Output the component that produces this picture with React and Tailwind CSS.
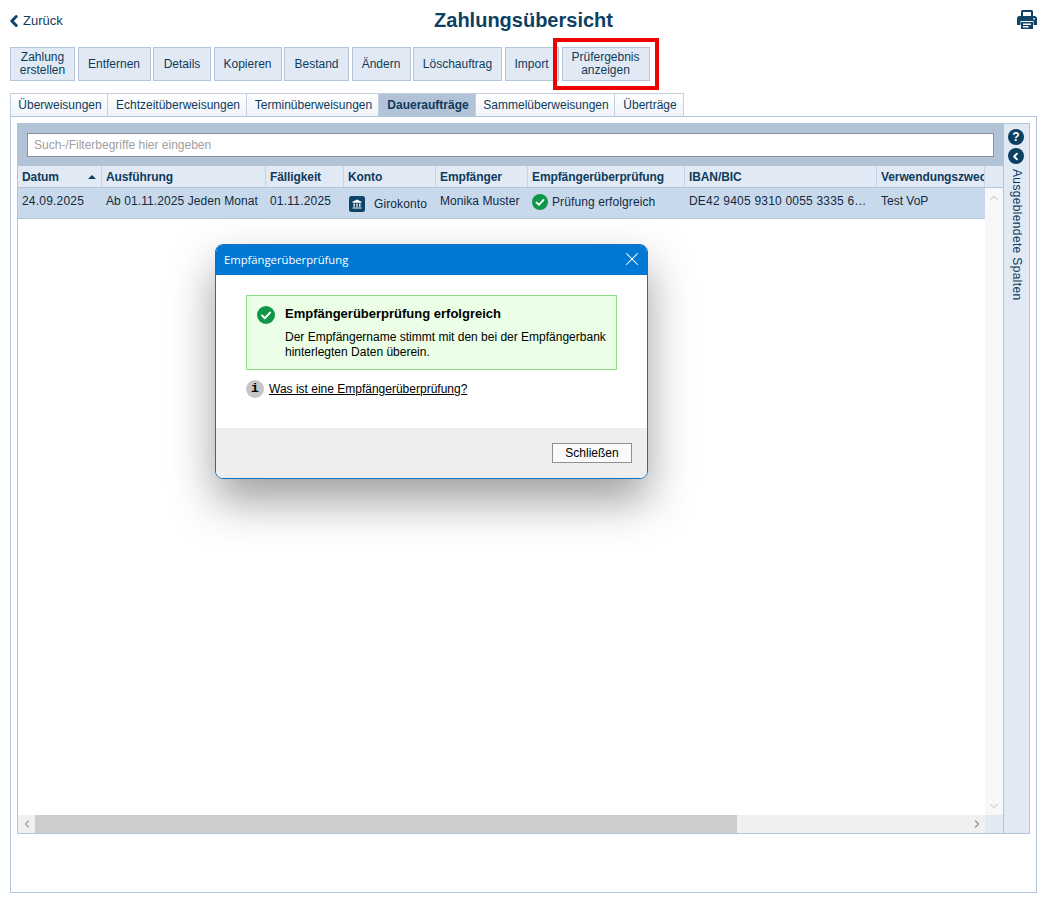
import React from 'react';
import { X, ChevronUp, ChevronDown, ChevronLeft, ChevronRight } from 'lucide-react';

const actions = [
  { label: ['Zahlung', 'erstellen'], width: 'w-[65px]' },
  { label: ['Entfernen'], width: 'w-[73px]' },
  { label: ['Details'], width: 'w-[58px]' },
  { label: ['Kopieren'], width: 'w-[68px]' },
  { label: ['Bestand'], width: 'w-[65px]' },
  { label: ['Ändern'], width: 'w-[59px]' },
  { label: ['Löschauftrag'], width: 'w-[89px]' },
  { label: ['Import'], width: 'w-[54px]' },
];

const tabs = [
  { label: 'Überweisungen', width: 'w-[98px]' },
  { label: 'Echtzeitüberweisungen', width: 'w-[139px]' },
  { label: 'Terminüberweisungen', width: 'w-[132px]' },
  { label: 'Daueraufträge', width: 'w-[97px]', active: true },
  { label: 'Sammelüberweisungen', width: 'w-[139px]' },
  { label: 'Überträge', width: 'w-[69px]' },
];

const columns = [
  { label: 'Datum', width: 'w-[84px]', sort: true },
  { label: 'Ausführung', width: 'w-[164px]' },
  { label: 'Fälligkeit', width: 'w-[78px]' },
  { label: 'Konto', width: 'w-[92px]' },
  { label: 'Empfänger', width: 'w-[92px]' },
  { label: 'Empfängerüberprüfung', width: 'w-[157px]' },
  { label: 'IBAN/BIC', width: 'w-[192px]' },
  { label: 'Verwendungszweck', width: 'w-[108px]' },
];

function CheckBadge({ size }) {
  return (
    <svg width={size} height={size} viewBox="0 0 18 18" className="shrink-0">
      <circle cx="9" cy="9" r="9" fill="#109648" />
      <path d="M5 9.4l2.8 2.8L13 6.6" fill="none" stroke="#fff" strokeWidth="2" strokeLinecap="round" strokeLinejoin="round" />
    </svg>
  );
}

function BankIcon() {
  return (
    <svg width="16" height="16" viewBox="0 0 16 16" className="shrink-0">
      <rect width="16" height="16" rx="2.5" fill="#0d4468" />
      <path d="M8 3.5L3.5 5.8v.9h9v-.9zM4.5 7.4h1.3v3.4H4.5zM7.35 7.4h1.3v3.4h-1.3zM10.2 7.4h1.3v3.4h-1.3zM3.5 11.4h9v1.2h-9z" fill="#fff" />
    </svg>
  );
}

function PrinterIcon() {
  return (
    <svg width="20" height="21" viewBox="0 0 20 21">
      <path d="M4 8V2.6C4 1.7 4.7 1 5.6 1h8.8c.9 0 1.6.7 1.6 1.6V8h-2V3H6v5z" fill="#0d4468" />
      <path d="M2.5 7h15C18.9 7 20 8.1 20 9.5V16h-3.5v-4h-13v4H0V9.5C0 8.1 1.1 7 2.5 7z" fill="#0d4468" />
      <path d="M4 13h12v7H4z" fill="#0d4468" />
      <path d="M6 14.5h8v1.4H6zM6 17h5.5v1.4H6z" fill="#fff" />
      <circle cx="17" cy="9.8" r="0.9" fill="#fff" />
    </svg>
  );
}

export default function App() {
  return (
    <div className="relative h-[898px] w-[1043px] overflow-hidden bg-white font-['Liberation_Sans',Arial,sans-serif] text-xs text-[#0f3a5c]">
      {/* Kopfzeile */}
      <div className="flex h-[47px] items-start pl-[10px] pr-[6px] pt-[9px]">
        <div className="flex h-[22px] w-[200px] items-center pt-[1px] text-[13px]">
          <ChevronLeft size={18} strokeWidth={4} className="-ml-[5px] text-[#0d4468]" />
          <span>Zurück</span>
        </div>
        <h1 className="flex-1 text-center text-xl leading-[22px] font-bold text-[#0d3f63]">Zahlungsübersicht</h1>
        <div className="flex w-[200px] justify-end">
          <PrinterIcon />
        </div>
      </div>

      {/* Aktionen */}
      <div className="flex h-[34px] gap-[2.5px] pl-[10px]">
        {actions.map((a) => (
          <button key={a.label[0]} className={`${a.width} border border-[#b4c4d9] bg-[#e1eaf4] text-center leading-[13px]`}>
            {a.label.map((l) => (
              <div key={l}>{l}</div>
            ))}
          </button>
        ))}
        <div className="relative ml-[0.5px]">
          <button className="h-[34px] w-[88px] border border-[#b4c4d9] bg-[#e1eaf4] text-center leading-[13px]">
            <div>Prüfergebnis</div>
            <div>anzeigen</div>
          </button>
          <div className="pointer-events-none absolute -inset-[9px] border-4 border-[#ee0000]" />
        </div>
      </div>

      {/* Tabs */}
      <div className="mt-[12px] flex h-[23px] pl-[10px]">
        {tabs.map((t) => (
          <div
            key={t.label}
            className={`${t.width} flex items-center justify-center border-t border-r border-[#c3d0e0] pl-[2px] first:border-l ${
              t.active ? 'border-[#b3c3d7] bg-[#b3c3d7] font-bold' : 'bg-gradient-to-b from-white to-[#eef3f9]'
            }`}
          >
            {t.label}
          </div>
        ))}
      </div>

      {/* Inhalt */}
      <div className="ml-[10px] h-[777px] w-[1027px] border border-[#b4c4d9] p-[6px]">
        <div className="flex h-[711px] w-[1013px] border border-[#b4c4d9]">
          <div className="flex w-[985px] flex-col">
            <div className="flex h-[42px] shrink-0 items-start bg-[#b3c3d7] pl-[9px] pt-[9px]">
              <div className="flex h-[24px] w-[967px] items-center border border-[#8c9198] bg-white px-[6px] text-[#a0a0a0]">
                Such-/Filterbegriffe hier eingeben
              </div>
            </div>
            <div className="flex min-h-0 flex-1">
              {/* Tabelle */}
              <div className="flex w-[967px] flex-col">
                <div className="flex h-[22px] shrink-0 overflow-hidden border-b border-[#b4c4d9] bg-[#e1eaf4] font-bold tracking-[-0.1px]">
                  {columns.map((c) => (
                    <div key={c.label} className={`${c.width} flex shrink-0 items-center justify-between overflow-hidden border-r border-[#c3d2e4] pl-[4px] pr-[5px] whitespace-nowrap`}>
                      {c.label}
                      {c.sort && <span className="h-0 w-0 border-x-[4px] border-b-[4px] border-x-transparent border-b-[#0d3f63]" />}
                    </div>
                  ))}
                </div>
                <div className="min-h-0 flex-1">
                  <div className="flex h-[31px] border-b border-[#b4c4d9] bg-[#c9d9ec] text-[#12293f]">
                    <div className="flex w-[84px] items-center pl-[4px] pb-[5px] tracking-[0.2px]">24.09.2025</div>
                    <div className="flex w-[164px] items-center pl-[4px] pb-[5px] tracking-[0.08px] whitespace-nowrap">Ab 01.11.2025 Jeden Monat</div>
                    <div className="flex w-[78px] items-center pl-[4px] pb-[5px] tracking-[0.2px]">01.11.2025</div>
                    <div className="flex w-[92px] items-center gap-[9px] pl-[5px] pt-[2px] tracking-[0.1px]">
                      <BankIcon />
                      Girokonto
                    </div>
                    <div className="flex w-[92px] items-center pl-[4px] pb-[5px] tracking-[0.06px]">Monika Muster</div>
                    <div className="flex w-[157px] items-center gap-[4px] pl-[4px] pb-[3px] tracking-[0.1px]">
                      <CheckBadge size={16} />
                      Prüfung erfolgreich
                    </div>
                    <div className="flex w-[192px] items-center pl-[4px] pb-[5px] tracking-[0.2px] whitespace-nowrap">DE42 9405 9310 0055 3335 6…</div>
                    <div className="flex w-[108px] items-center pl-[4px] pb-[5px]">Test VoP</div>
                  </div>
                </div>
                {/* horizontale Scrollleiste */}
                <div className="flex h-[18px] shrink-0 bg-[#f0f0f0]">
                  <div className="flex w-[17px] items-center justify-center">
                    <ChevronLeft size={12} strokeWidth={2.5} className="text-[#a3a3a3]" />
                  </div>
                  <div className="w-[702px] bg-[#cdcdcd]" />
                  <div className="flex flex-1 items-center justify-end pr-[2px]">
                    <ChevronRight size={12} strokeWidth={2.5} className="text-[#8f8f8f]" />
                  </div>
                </div>
              </div>

              {/* vertikale Scrollleiste */}
              <div className="flex w-[18px] flex-col">
                <div className="h-[22px] shrink-0 border-b border-[#b4c4d9] bg-[#e1eaf4]" />
                <div className="flex flex-1 flex-col items-center justify-between bg-[#f7f8f9] py-[2px]">
                  <ChevronUp size={14} className="mt-[1px] text-[#d8d8d8]" />
                  <ChevronDown size={14} className="text-[#d8d8d8]" />
                </div>
                <div className="h-[18px] shrink-0 bg-[#e1eaf4]" />
              </div>
            </div>
          </div>

          {/* Ausgeblendete Spalten */}
          <div className="flex flex-1 flex-col items-center gap-[3px] border-l border-[#b4c4d9] bg-[#e1eaf4] pt-[5px]">
            <div className="-ml-[1px] flex h-[16px] w-[16px] items-center justify-center rounded-full bg-[#0d3f63] text-[12px] leading-none font-bold text-white">?</div>
            <div className="-ml-[1px] flex h-[16px] w-[16px] items-center justify-center rounded-full bg-[#0d3f63]">
              <ChevronLeft size={11} strokeWidth={4} className="-ml-[1px] text-white" />
            </div>
            <div className="mt-[2px] text-[12px] tracking-[0.35px] whitespace-nowrap [writing-mode:vertical-rl]">Ausgeblendete Spalten</div>
          </div>
        </div>
      </div>

      {/* Dialog */}
      <div className="absolute top-[244px] left-[215px] flex h-[235px] w-[433px] flex-col overflow-hidden rounded-lg border border-[#0f72c4] bg-white text-black shadow-[0_22px_45px_rgba(0,0,0,0.38)]">
        <div className="flex h-[30px] shrink-0 items-center justify-between bg-[#0078d4] pb-[1px] pl-[8px] pr-[4px] font-['Open_Sans',sans-serif] text-[11.25px] text-white">
          Empfängerüberprüfung
          <X size={22} strokeWidth={1.1} className="-mt-[1px]" />
        </div>
        <div className="flex-1 pl-[30px] pt-[20px]">
          <div className="flex h-[75px] w-[371px] border border-[#8fdd84] bg-[#eaffe6] pl-[10px] pt-[10px]">
            <CheckBadge size={18} />
            <div className="ml-[10px]">
              <div className="text-[13px] leading-[16px] font-bold">Empfängerüberprüfung erfolgreich</div>
              <div className="mt-[8px] text-[12px] leading-[15px]">
                Der Empfängername stimmt mit den bei der Empfängerbank
                <br />
                hinterlegten Daten überein.
              </div>
            </div>
          </div>
          <div className="mt-[10px] flex items-center gap-[5px]">
            <span className="flex h-[18px] w-[18px] items-center justify-center rounded-full bg-[#c6c6c6] font-['Liberation_Mono',monospace] text-[13px] font-bold">i</span>
            <span className="underline">Was ist eine Empfängerüberprüfung?</span>
          </div>
        </div>
        <div className="flex h-[50px] shrink-0 items-start justify-end bg-[#eeeeee] pr-[15px] pt-[15px]">
          <button className="h-[20px] w-[80px] border border-[#8f8f8f] bg-[#fafafa] text-center">Schließen</button>
        </div>
      </div>
    </div>
  );
}
